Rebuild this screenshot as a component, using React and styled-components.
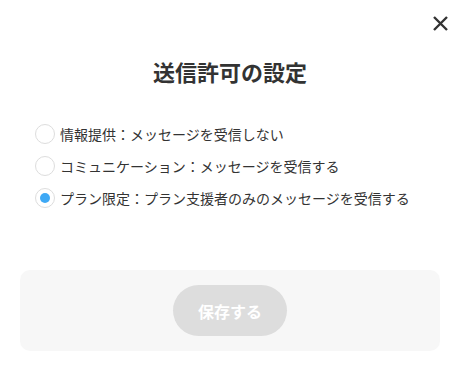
import React, { useState } from 'react';
import styled, { createGlobalStyle } from 'styled-components';

const GlobalStyle = createGlobalStyle`
	body {
		margin: 0;
		background: #fff;
		font-family: 'Noto Sans CJK JP', 'Noto Sans', sans-serif;
		color: #333;
	}
`;

const options = [
	{ id: 'info', label: '情報提供：メッセージを受信しない' },
	{ id: 'comm', label: 'コミュニケーション：メッセージを受信する' },
	{ id: 'plan', label: 'プラン限定：プラン支援者のみのメッセージを受信する' },
];

const App = () => {
	const [selected, setSelected] = useState('plan');

	return (
		<>
			<GlobalStyle />
			<Wrapper>
				<CloseButton type="button" aria-label="閉じる">
					<svg width="15" height="15" viewBox="0 0 15 15">
						<path d="M1 1 L14 14 M14 1 L1 14" stroke="#333" strokeWidth="2.4" fill="none" />
					</svg>
				</CloseButton>
				<Title>送信許可の設定</Title>
				<OptionList>
					{options.map((item) => (
						<Option key={item.id} onClick={() => setSelected(item.id)}>
							<Radio $checked={item.id === selected} />
							<span>{item.label}</span>
						</Option>
					))}
				</OptionList>
				<Footer>
					<SaveButton type="button" disabled>
						保存する
					</SaveButton>
				</Footer>
			</Wrapper>
		</>
	);
};

const Wrapper = styled.div`
	position: relative;
	width: 463px;
	height: 367px;
	box-sizing: border-box;
	padding: 0 23px 0 20px;
`;

const CloseButton = styled.button`
	position: absolute;
	top: 15px;
	right: 15px;
	width: 16px;
	height: 16px;
	padding: 0;
	border: none;
	background: transparent;
	cursor: pointer;
	display: flex;
	align-items: center;
	justify-content: center;
`;

const Title = styled.h2`
	margin: 0;
	padding-top: 55px;
	font-size: 22px;
	line-height: 33px;
	font-weight: 700;
	text-align: center;
	color: #333;
`;

const OptionList = styled.div`
	display: flex;
	flex-direction: column;
	gap: 12px;
	margin-top: 36px;
	padding-left: 15px;
`;

const Option = styled.label`
	display: flex;
	align-items: center;
	gap: 5px;
	height: 20px;
	font-size: 14px;
	color: #333;
	cursor: pointer;
`;

const Radio = styled.span`
	flex: none;
	width: 20px;
	height: 20px;
	box-sizing: border-box;
	border: 1px solid #ddd;
	border-radius: 50%;
	background: #fff;
	display: flex;
	align-items: center;
	justify-content: center;

	&::after {
		content: '';
		width: 10px;
		height: 10px;
		border-radius: 50%;
		background: ${(p) => (p.$checked ? '#3fa9f5' : 'transparent')};
	}
`;

const Footer = styled.div`
	margin-top: 62px;
	background: #f7f7f7;
	border-radius: 10px;
	padding: 15px 0;
	display: flex;
	justify-content: center;
`;

const SaveButton = styled.button`
	width: 114px;
	height: 51px;
	border: none;
	border-radius: 26px;
	background: #ddd;
	color: #fff;
	font-family: inherit;
	font-size: 16px;
	font-weight: 700;
	cursor: default;
`;

export default App;
